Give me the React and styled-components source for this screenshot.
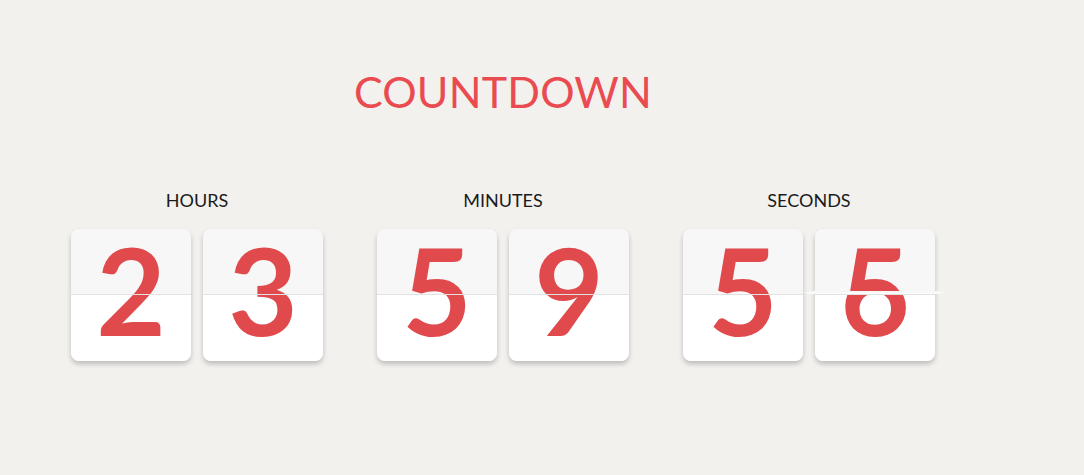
import React from "react";
import styled, { createGlobalStyle } from "styled-components";

const Global = createGlobalStyle`
  html, body { margin: 0; padding: 0; }
  body {
    background: #f2f1ee;
    font-family: Lato, "Noto Sans", sans-serif;
    width: 1084px;
    height: 475px;
    overflow: hidden;
  }
`;

const Page = styled.main`
  width: 864px;
  padding: 70px 0 0 71px;
  display: flex;
  flex-direction: column;
  align-items: center;
`;

const Title = styled.h1`
  margin: 0;
  font-size: 43px;
  line-height: 43px;
  font-weight: 400;
  color: #ea4b50;
  letter-spacing: 0.2px;
`;

const Clock = styled.div`
  margin-top: 78px;
  display: flex;
  gap: 54px;
  width: 100%;
`;

const Group = styled.section`
  width: 252px;
  display: flex;
  flex-direction: column;
  align-items: center;
`;

const Label = styled.div`
  font-size: 18px;
  line-height: 18px;
  color: #1b1b1b;
  text-transform: uppercase;
  margin-bottom: 20px;
`;

const Cards = styled.div`
  display: flex;
  gap: 12px;
`;

const Card = styled.div`
  position: relative;
  width: 120px;
  height: 132px;
  border-radius: 8px;
  box-shadow: 0 3px 5px rgba(0, 0, 0, 0.22);
  display: flex;
  flex-direction: column;
`;

const Half = styled.div`
  height: 66px;
  overflow: hidden;
  background: ${(p) => (p.$top ? "#f7f7f7" : "#ffffff")};
  border-radius: ${(p) => (p.$top ? "8px 8px 0 0" : "0 0 8px 8px")};
  border-bottom: ${(p) => (p.$top ? "1px solid #e2e2e2" : "none")};
  box-sizing: border-box;
`;

const Digit = styled.div`
  height: 123px;
  margin-top: ${(p) => (p.$bottom ? "-66px" : "0")};
  text-align: center;
  font-size: 120px;
  line-height: 123px;
  font-weight: 700;
  color: #e04a4d;
`;

const Flap = styled.div`
  position: absolute;
  left: -12px;
  right: -10px;
  top: 62px;
  height: 3px;
  background: linear-gradient(to bottom, #f4f4f4, #ffffff);
  clip-path: polygon(0 50%, 6% 0, 94% 0, 100% 50%, 94% 100%, 6% 100%);
`;

const FlipCard = ({ top, bottom, flipping }) => (
  <Card>
    <Half $top>
      <Digit>{top}</Digit>
    </Half>
    <Half>
      <Digit $bottom>{bottom}</Digit>
    </Half>
    {flipping && <Flap />}
  </Card>
);

const groups = [
  { label: "Hours", digits: [["2", "2"], ["3", "3"]] },
  { label: "Minutes", digits: [["5", "5"], ["9", "9"]] },
  { label: "Seconds", digits: [["5", "5"], ["5", "6", true]] },
];

export default function App() {
  return (
    <>
      <Global />
      <Page>
        <Title>COUNTDOWN</Title>
        <Clock>
          {groups.map((g) => (
            <Group key={g.label}>
              <Label>{g.label}</Label>
              <Cards>
                {g.digits.map(([t, b, f], i) => (
                  <FlipCard key={i} top={t} bottom={b} flipping={f} />
                ))}
              </Cards>
            </Group>
          ))}
        </Clock>
      </Page>
    </>
  );
}
